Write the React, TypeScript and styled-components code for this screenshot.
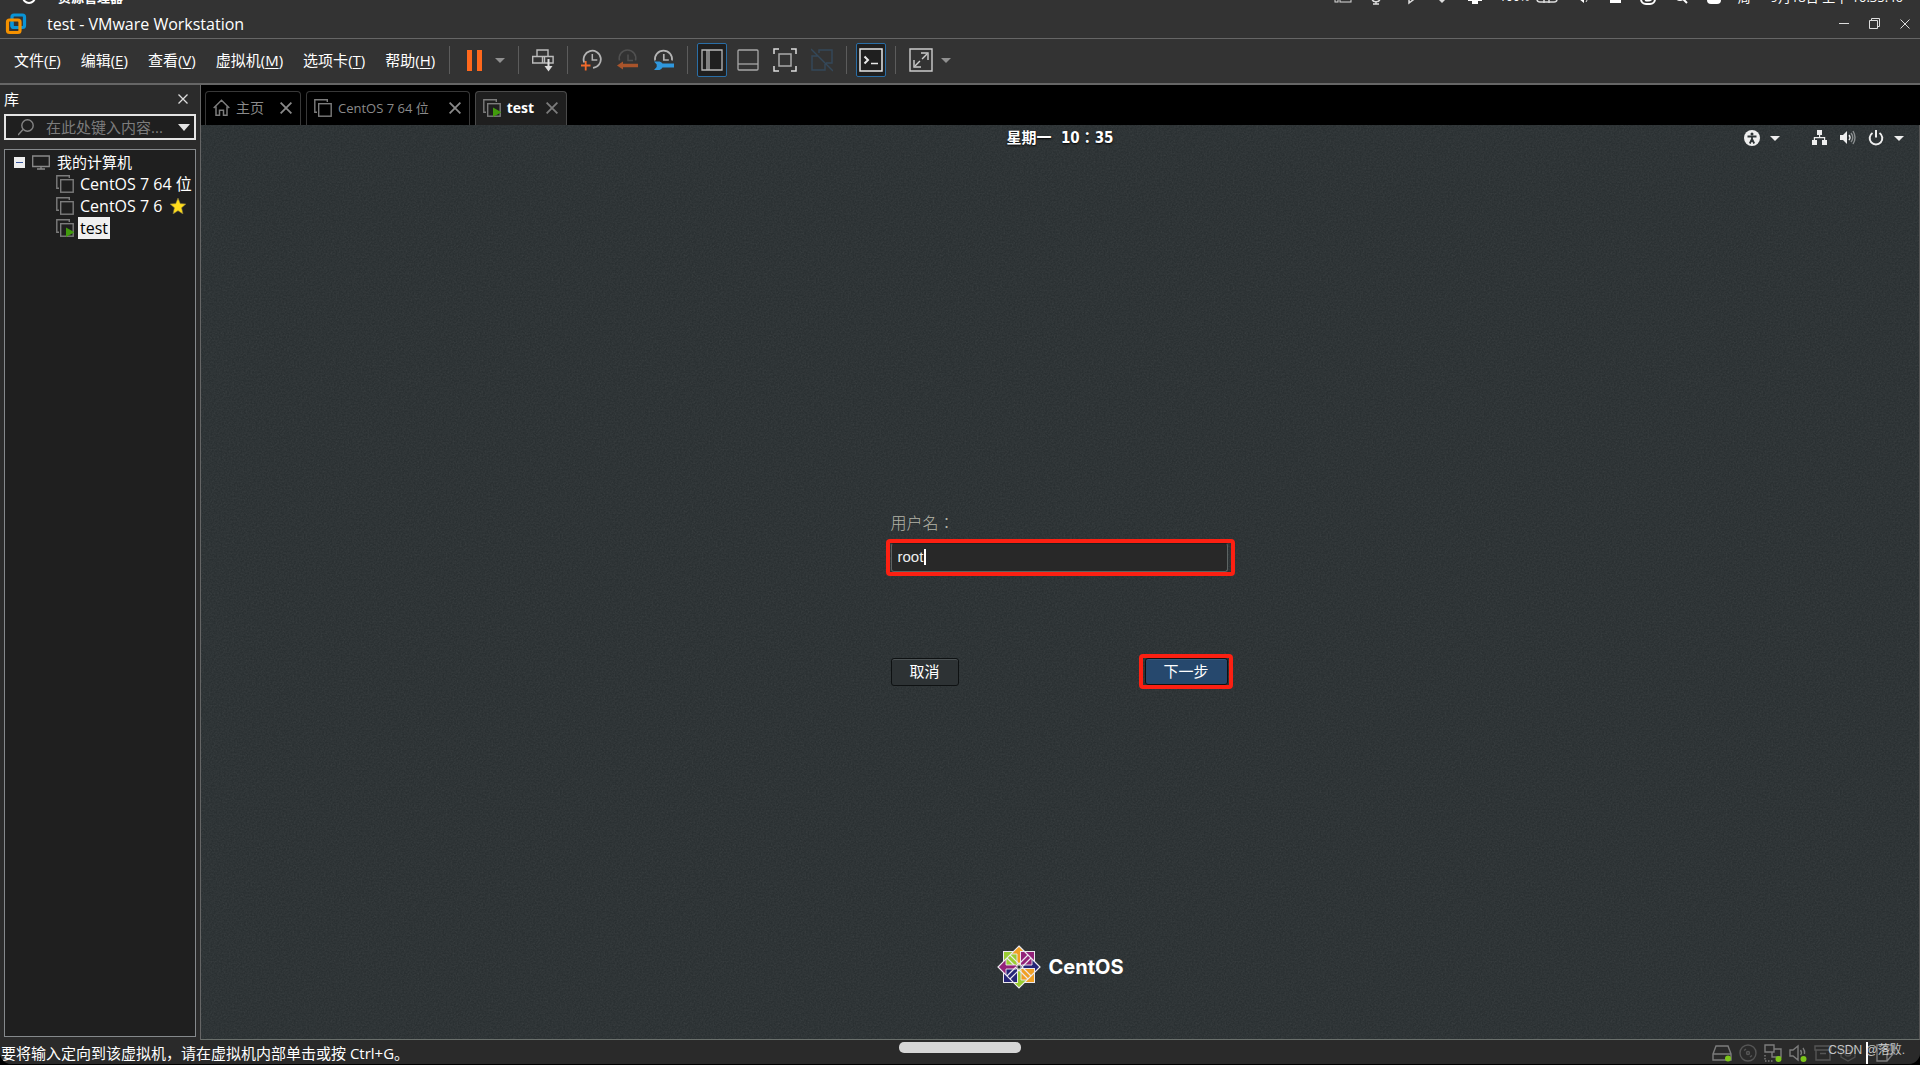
import React from 'react';
import styled, { createGlobalStyle, css } from 'styled-components';

const ui = `"Open Sans", "Noto Sans CJK SC", sans-serif`;

const noise = `url("data:image/svg+xml,%3Csvg xmlns='http://www.w3.org/2000/svg' width='256' height='256'%3E%3Cfilter id='n'%3E%3CfeTurbulence type='fractalNoise' baseFrequency='0.6' numOctaves='2' stitchTiles='stitch'/%3E%3CfeColorMatrix values='0 0 0 0 1 0 0 0 0 1 0 0 0 0 1 0.5 0.5 0 0 -0.36'/%3E%3C/filter%3E%3Crect width='256' height='256' filter='url(%23n)' opacity='0.14'/%3E%3C/svg%3E")`;

const GlobalStyle = createGlobalStyle`
  *, *::before, *::after { box-sizing: border-box; }
  html, body { margin: 0; background: #000; }
  button, input { font: inherit; color: inherit; margin: 0; }
  button { background: none; border: 0; padding: 0; white-space: nowrap; }
  svg { display: block; flex: none; }
  svg:not([fill]) { fill: none; }
`;

const Window = styled.div`
  display: flex;
  flex-direction: column;
  height: 100vh;
  background: #2b2b2b;
  color: #fff;
  font: 15px/20px ${ui};
  border-bottom: 1px solid #000;
  border-radius: 0 0 12px 12px;
  overflow: hidden;
`;

/* System strip that the window partly covers */
const SystemStrip = styled.div`
  display: flex;
  align-items: flex-end;
  flex: none;
  height: 5px;
  padding: 0 17px 0 22px;
  background: #333;
  overflow: hidden;
  font-size: 13px;
  line-height: 16px;
  white-space: nowrap;
`;
const StripApp = styled.span`
  margin-left: 22px;
  font-weight: 700;
`;
const StripIcons = styled.div`
  display: flex;
  align-items: flex-end;
  gap: 15px;
  margin-left: auto;
`;
const StripPower = styled.span`
  display: flex;
  align-items: flex-end;
  gap: 6px;
  font-size: 12px;
`;
const StripClock = styled.span`
  white-space: pre;
`;

const TitleBar = styled.header`
  display: flex;
  align-items: center;
  flex: none;
  height: 33px;
  padding: 4px 10px 0 5px;
  background: #333;
`;
const Title = styled.h1`
  margin: 0 auto 0 20px;
  font-size: 16px;
  line-height: 20px;
  font-weight: 400;
`;
const WindowButtons = styled.div`
  display: flex;
  gap: 20px;
`;

const Toolbar = styled.div`
  display: flex;
  align-items: center;
  flex: none;
  height: 47px;
  padding: 0 14px 2px;
  background: #333;
  border-top: 1px solid #666;
  border-bottom: 2px solid #666;
`;
const Menu = styled.nav`
  display: flex;
  gap: 20px;
  margin-right: 14px;
  u { text-underline-offset: 2px; }
`;
const Group = styled.div<{ $gap: number }>`
  display: flex;
  align-items: center;
  gap: ${p => p.$gap}px;
  padding: 0 13px;
  border-left: 1px solid #5c5c5c;
  height: 28px;
`;
const ToolButton = styled.button<{ $active?: boolean }>`
  display: flex;
  align-items: center;
  justify-content: center;
  ${p => p.$active && css`
    width: 30px;
    height: 34px;
    margin: 0 -4px;
    background: #1f1f1f;
    border: 1px solid #2a6ea6;
    border-radius: 2px;
  `}
`;

const Body = styled.div`
  display: flex;
  flex: 1;
  min-height: 0;
`;
const Sidebar = styled.aside`
  display: flex;
  flex-direction: column;
  flex: none;
  width: 200px;
  padding: 0 4px 3px;
`;
const SidebarHead = styled.div`
  display: flex;
  align-items: center;
  justify-content: space-between;
  height: 29px;
  padding: 0 8px 2px 0;
`;
const SidebarTitle = styled.h2`
  margin: 0;
  font-size: 15px;
  font-weight: 400;
`;
const SearchBox = styled.div`
  display: flex;
  align-items: center;
  flex: none;
  height: 26px;
  padding: 0 4px 0 12px;
  background: #1f1f1f;
  border: 2px solid #e4e4e4;
`;
const SearchInput = styled.input`
  flex: 1;
  min-width: 0;
  height: 20px;
  padding: 0;
  margin-left: 12px;
  background: none;
  border: 0;
  outline: 0;
  &::placeholder { color: #7c7c7c; opacity: 1; }
`;
const Tree = styled.ul`
  flex: 1;
  margin: 9px 0 0;
  padding: 1px 0;
  list-style: none;
  background: #1f1f1f;
  border: 1px solid #85898c;
`;
const TreeRow = styled.li<{ $child?: boolean }>`
  display: flex;
  align-items: center;
  height: 22px;
  padding: 0 2px 0 ${p => (p.$child ? 51 : 9)}px;
  gap: ${p => (p.$child ? 4 : 5)}px;
  font-size: ${p => (p.$child ? 16 : 15)}px;
`;
const Expander = styled.button`
  display: flex;
  align-items: center;
  justify-content: center;
  width: 11px;
  height: 11px;
  margin-right: 2px;
  background: #eee;
  &::before { content: ""; width: 7px; height: 1px; background: #3856a0; }
`;
const TreeName = styled.span<{ $selected?: boolean }>`
  padding: 0 2px;
  line-height: 22px;
  white-space: nowrap;
  ${p => p.$selected && css`background: #f0f0f0; color: #000;`}
`;
const ShortName = styled(TreeName)`
  width: 88px;
`;

const Workspace = styled.main`
  display: flex;
  flex-direction: column;
  flex: 1;
  min-width: 0;
  border-left: 1px solid #666;
`;
const Tabs = styled.div`
  display: flex;
  align-items: flex-end;
  flex: none;
  gap: 5px;
  height: 40px;
  padding-left: 4px;
  background: #000;
`;
const Tab = styled.div<{ $active?: boolean; $size: number; $closeGap: number }>`
  display: flex;
  align-items: center;
  height: 34px;
  padding: 0 8px 2px 7px;
  border: 1px solid ${p => (p.$active ? '#4a4a4a' : '#383838')};
  border-bottom: 0;
  border-radius: 4px 4px 0 0;
  background: ${p => (p.$active ? '#1f1f1f' : '#000')};
  color: ${p => (p.$active ? '#fff' : '#8a8a8a')};
  font-size: ${p => p.$size}px;
  font-weight: ${p => (p.$active ? 700 : 400)};
  gap: 6px;
  & > :last-child { margin-left: ${p => p.$closeGap}px; }
`;

const Screen = styled.section`
  display: flex;
  flex-direction: column;
  flex: 1;
  min-height: 0;
  padding-bottom: 50px;
  background: #2a3032 ${noise};
  border-right: 1px solid #555;
  border-bottom: 1px solid #6a706c;
`;
const PanelBar = styled.div`
  display: grid;
  grid-template-columns: 1fr auto 1fr;
  align-items: center;
  height: 26px;
  padding: 0 15px;
  text-shadow: 0 1px 2px #000;
`;
const Clock = styled.time`
  grid-column: 2;
  font: 700 15px/20px "DejaVu Sans Condensed", "Noto Sans CJK TC", sans-serif;
  white-space: pre;
`;
const Indicators = styled.div`
  display: flex;
  align-items: center;
  justify-content: flex-end;
  gap: 12px;
`;
const Indicator = styled.button<{ $wide?: boolean }>`
  display: flex;
  align-items: center;
  gap: 10px;
  margin-right: ${p => (p.$wide ? 20 : 0)}px;
`;

const Login = styled.form`
  display: flex;
  flex-direction: column;
  align-self: center;
  width: 349px;
  margin-top: 359px;
`;
const FieldLabel = styled.label`
  padding-left: 5px;
  color: #b4b4a8;
  font: 300 16px/24px "Noto Sans CJK TC", sans-serif;
`;
const Highlight = styled.div`
  position: relative;
  display: flex;
  border: 4px solid #fc2012;
  border-radius: 4px;
`;
const FieldFrame = styled(Highlight)`
  height: 37px;
  margin-top: 5px;
  padding: 0 3px 0 1px;
`;
const Field = styled.input`
  flex: 1;
  min-width: 0;
  padding: 0 6px 2px;
  background: #282828;
  border: 1px solid #5d6463;
  border-top-color: #1c1f1f;
  border-radius: 3px;
  outline: 0;
  caret-color: transparent;
  color: #eee;
  font: 15px/20px "Liberation Sans", sans-serif;
`;
const TextCursor = styled.span`
  position: absolute;
  left: 34px;
  top: 6px;
  width: 2px;
  height: 16px;
  background: #fff;
`;
const Actions = styled.div`
  display: flex;
  align-items: center;
  justify-content: space-between;
  margin-top: 78px;
  padding: 0 2px 0 5px;
`;
const NextFrame = styled(Highlight)`
  height: 35px;
  padding: 0 1px 0 2px;
`;
const LoginButton = styled.button<{ $primary?: boolean }>`
  width: ${p => (p.$primary ? 83 : 68)}px;
  height: ${p => (p.$primary ? 27 : 28)}px;
  padding-bottom: 2px;
  background: ${p => (p.$primary ? '#26486d' : '#2d3234')};
  border: 1px solid #0e1112;
  border-radius: 3px;
  box-shadow: inset 0 1px ${p => (p.$primary ? '#38597b' : '#4c5254')};
  font: 400 15px/20px "Noto Sans CJK SC", sans-serif;
`;
const Brand = styled.div`
  display: flex;
  align-items: center;
  align-self: center;
  gap: 8px;
  margin-top: auto;
  font: 700 20px/24px Inter, sans-serif;
`;

const StatusBar = styled.footer`
  position: relative;
  display: flex;
  align-items: center;
  justify-content: space-between;
  flex: none;
  height: 24px;
  padding: 2px 26px 0 1px;
  background: #2a2a2a;
`;
const Devices = styled.div`
  display: flex;
  align-items: center;
  gap: 7px;
`;
const DeviceRule = styled.i`
  width: 2px;
  height: 22px;
  margin: 0 1px 0 2px;
  background: #fff;
`;
const HomePill = styled.span`
  position: absolute;
  left: 50%;
  top: 2px;
  width: 122px;
  height: 11px;
  margin-left: -61px;
  border-radius: 5px;
  background: #d6d6d6;
`;
const Watermark = styled.span`
  position: absolute;
  right: 15px;
  top: 0;
  color: rgba(225, 225, 225, 0.85);
  font: 12px/20px "Liberation Sans", "Noto Sans CJK SC", sans-serif;
`;

const Cross = ({ size = 9, color = '#ddd', width = 1 }: { size?: number; color?: string; width?: number }) => (
  <svg width={size} height={size} viewBox="0 0 10 10" stroke={color} strokeWidth={width}>
    <path d="M.5.5l9 9M9.5.5l-9 9" />
  </svg>
);
const Caret = ({ w = 10, h = 5, color = '#909090' }: { w?: number; h?: number; color?: string }) => (
  <svg width={w} height={h} viewBox="0 0 10 5" preserveAspectRatio="none"><path d="M0 0h10L5 5z" fill={color} /></svg>
);
const VmIcon = ({ running, color = '#7c7c7c' }: { running?: boolean; color?: string }) => (
  <svg width="18" height="18" stroke={color} strokeWidth="1.4">
    <path d="M3 13.3H.8V.8h12.5V3" />
    <rect x="4.7" y="4.7" width="12.5" height="12.5" />
    {running && <path d="M10 8.5l8.5 4.8-8.5 4.7z" fill="#419b0c" stroke="none" />}
  </svg>
);
const VmwareLogo = () => (
  <svg width="22" height="22" viewBox="0 0 22 22" strokeWidth="3.2">
    <rect x="7" y="2" width="12.5" height="12.5" rx="2" stroke="#0a94d6" />
    <rect x="2.5" y="7" width="12.5" height="12.5" rx="2" stroke="#f59100" />
    <path d="M7 9v3.5q0 2 2 2h3" stroke="#0a94d6" />
  </svg>
);
const SnapshotTake = () => (
  <svg width="21" height="22">
    <path d="M3.2 13.5A8.6 8.6 0 1 1 12 18.9" stroke="#b4b4b4" strokeWidth="1.8" />
    <path d="M11.3 5v6h5" stroke="#b4b4b4" strokeWidth="1.5" />
    <path d="M0 16.5h9.5M4.7 12v9.5" stroke="#f2692a" strokeWidth="1.8" />
  </svg>
);
const SnapshotRevert = () => (
  <svg width="21" height="22">
    <path d="M2.5 11.5a8.3 8.3 0 1 1 16 0M11 5.5v6h5" stroke="#505050" strokeWidth="1.5" />
    <path d="M0 16.5l6-4v2.3h15v3.4H6v2.3z" fill="#a9542b" />
  </svg>
);
const SnapshotManage = () => (
  <svg width="21" height="22">
    <path d="M2 11.5a8.6 8.6 0 1 1 17 0M10.8 5v6h5" stroke="#b4b4b4" strokeWidth="1.7" />
    <path d="M1 12.5h5.5a4.6 4.6 0 0 1 3 2H21v4H9.5a4.6 4.6 0 0 1-3 2.500H1l2.700-3v-2.600z" fill="#2f97dd" />
  </svg>
);
const SendKeys = () => (
  <svg width="22" height="23" stroke="#bcbcbc" strokeWidth="1.4">
    <path d="M5 7.500V1h11v6.500" />
    <path d="M.7 7.500h20.400V14H.7zM10.500 7.500V14M12.500 7.500V14" />
    <path d="M16.500 10v7" stroke="#ddd" strokeWidth="2" /><path d="M12.500 17h8l-4 5.500z" fill="#ddd" stroke="none" />
  </svg>
);
const Dot = ({ x, y }: { x: number; y: number }) => <circle cx={x} cy={y} r="3" fill="#7cc51a" stroke="none" />;

const CentosLogo = () => {
  const quarter = (turn: number, square: string, arrow: string) => (
    <g key={turn} transform={`rotate(${turn} 22 22)`}>
      <rect x="6.500" y="6.500" width="14" height="14" fill={square} />
      <path d="M22 1l8 8h-6v10l-2 2-2-2V9h-6z" fill={arrow} strokeWidth=".9" />
      <path d="M13 10l9 9M10 13l9 9" strokeWidth="1.200" />
    </g>
  );
  return (
    <svg width="44" height="44" stroke="#ece9ee" strokeWidth="1">
      {quarter(0, '#9acd32', '#f0a024')}
      {quarter(90, '#932279', '#262577')}
      {quarter(180, '#f0a024', '#9acd32')}
      {quarter(270, '#262577', '#932279')}
      <path d="M22 1L43 22 22 43 1 22z" strokeWidth="1.200" />
      <rect x="20" y="20" width="4" height="4" fill="#2e3436" strokeWidth="1" />
    </svg>
  );
};

const menus = [['文件', 'F'], ['编辑', 'E'], ['查看', 'V'], ['虚拟机', 'M'], ['选项卡', 'T'], ['帮助', 'H']];

export default function App() {
  return (
    <Window>
      <GlobalStyle />
      <SystemStrip>
        <svg width="14" height="14"><circle cx="7" cy="6" r="6" stroke="#fff" strokeWidth="2" /></svg>
        <StripApp>资源管理器</StripApp>
        <StripIcons>
          <svg width="18" height="14" stroke="#ddd"><rect x="1" y="3" width="3" height="8" /><rect x="6" y="1" width="11" height="10" /></svg>
          <svg width="18" height="14" stroke="#ddd" strokeWidth="1.500"><path d="M5 7c0 5 8 5 8 0M9 11v2M6 13h6" /></svg>
          <svg width="18" height="14" stroke="#ddd" strokeWidth="1.500"><path d="M5 3l8 6-4 3V1" /></svg>
          <svg width="18" height="14"><path d="M1 4h16l-8 8z" fill="#ddd" /></svg>
          <svg width="18" height="14"><path d="M2 2h14v8H2zM6 10h6v3H6z" fill="#fff" /></svg>
          <StripPower>
            100%
            <svg width="22" height="14" stroke="#ddd" strokeWidth="1.500"><rect x="1" y="2" width="20" height="9" rx="3" /><path d="M8 4v8M13 4v8" /></svg>
          </StripPower>
          <svg width="18" height="14"><path d="M2 4h4l5-4v12l-5-4H2z" fill="#fff" /><path d="M14 4q2 4-1 7" stroke="#ddd" /></svg>
          <svg width="18" height="14"><path d="M4 1h11v11H4z" fill="#fff" /></svg>
          <svg width="18" height="14" stroke="#fff" strokeWidth="2"><rect x="2" y="-2" width="14" height="15" rx="5" /><path d="M6 9q6 2 9-4" /></svg>
          <svg width="18" height="14" stroke="#fff" strokeWidth="2"><circle cx="8" cy="4" r="5" /><path d="M11 8l4 4" /></svg>
          <svg width="18" height="14"><rect x="2" y="0" width="14" height="13" rx="4" fill="#fff" /></svg>
          <StripClock>周一  9月18日 上午 10:35:46</StripClock>
        </StripIcons>
      </SystemStrip>

      <TitleBar>
        <VmwareLogo />
        <Title>test - VMware Workstation</Title>
        <WindowButtons>
          <button aria-label="最小化"><svg width="10" height="11" stroke="#ddd"><path d="M0 5.500h10" /></svg></button>
          <button aria-label="还原"><svg width="11" height="11" stroke="#ddd"><path d="M.5 2.500h8v8h-8zM2.500 2.500v-2h8v8h-2" /></svg></button>
          <button aria-label="关闭"><Cross size={10} /></button>
        </WindowButtons>
      </TitleBar>

      <Toolbar>
        <Menu>
          {menus.map(([name, key]) => <button key={key}>{name}(<u>{key}</u>)</button>)}
        </Menu>
        <Group $gap={8}>
          <ToolButton aria-label="挂起"><svg width="24" height="21"><path d="M4 0h5v21H4zM14 0h5v21h-5z" fill="#ff681c" /></svg></ToolButton>
          <ToolButton aria-label="电源选项"><Caret /></ToolButton>
        </Group>
        <Group $gap={0}><ToolButton aria-label="发送 Ctrl+Alt+Del"><SendKeys /></ToolButton></Group>
        <Group $gap={15}>
          <ToolButton aria-label="拍摄快照"><SnapshotTake /></ToolButton>
          <ToolButton aria-label="恢复快照"><SnapshotRevert /></ToolButton>
          <ToolButton aria-label="管理快照"><SnapshotManage /></ToolButton>
        </Group>
        <Group $gap={14}>
          <ToolButton $active aria-label="库"><svg width="22" height="22" stroke="#b8b8b8" strokeWidth="1.300"><path d="M1 1h20v20H1zM6 1v20M8 1v20" /></svg></ToolButton>
          <ToolButton aria-label="缩略图栏"><svg width="22" height="22" stroke="#a8a8a8" strokeWidth="1.300"><rect x="1" y="1" width="20" height="20" rx="1" /><path d="M1 15h20" /></svg></ToolButton>
          <ToolButton aria-label="全屏"><svg width="24" height="24" stroke="#ddd" strokeWidth="1.500"><path d="M1 6V1h5M18 1h5v5M23 18v5h-5M6 23H1v-5" /><rect x="6" y="6" width="12" height="12" stroke="#aaa" /></svg></ToolButton>
          <ToolButton aria-label="Unity"><svg width="22" height="24" stroke="#34485a" strokeWidth="1.400"><path d="M8 5V2h13v13h-6M7 8H1v14h13v-6M0 1l22 22" /></svg></ToolButton>
        </Group>
        <Group $gap={0}>
          <ToolButton $active aria-label="控制台"><svg width="24" height="24" stroke="#e8e8e8" strokeWidth="1.500"><path d="M1 1h22v22H1z" /><path d="M5.500 8.500l3.500 3.500-3.500 3.500" strokeWidth="2" /><path d="M12 15.500h7" /></svg></ToolButton>
        </Group>
        <Group $gap={8}>
          <ToolButton aria-label="自由拉伸"><svg width="24" height="24" stroke="#ccc" strokeWidth="1.400"><path d="M1 1h22v22H1zM12 5h7v7M5 12v7h7" /><path d="M6 18L18 6" strokeDasharray="7 3" /></svg></ToolButton>
          <ToolButton aria-label="拉伸选项"><Caret /></ToolButton>
        </Group>
      </Toolbar>

      <Body>
        <Sidebar>
          <SidebarHead><SidebarTitle>库</SidebarTitle><button aria-label="关闭库"><Cross size={10} width={1.3} /></button></SidebarHead>
          <SearchBox>
            <svg width="16" height="17" stroke="#858585" strokeWidth="1.400"><circle cx="9.500" cy="6.500" r="5.700" /><path d="M5 10.500L0 16" /></svg>
            <SearchInput aria-label="搜索" placeholder="在此处键入内容..." />
            <button aria-label="筛选"><Caret w={12} h={7} color="#e4e4e4" /></button>
          </SearchBox>
          <Tree>
            <TreeRow>
              <Expander aria-label="折叠" />
              <svg width="18" height="15" stroke="#8a8a8a" strokeWidth="1.300"><path d="M.7 1h16.600v10.500H.7zM9 11.500V14M5 14h8" /></svg>
              <TreeName>我的计算机</TreeName>
            </TreeRow>
            <TreeRow $child><VmIcon /><TreeName>CentOS 7 64 位</TreeName></TreeRow>
            <TreeRow $child>
              <VmIcon /><ShortName>CentOS 7 6</ShortName>
              <svg width="16" height="16"><path d="M8 0l2.300 5.600 5.700.4-4.400 3.800L13 16 8 12.700 3 16l1.400-6.200L0 6l5.700-.4z" fill="#ffdc1c" stroke="#7d7440" strokeWidth=".6" /></svg>
            </TreeRow>
            <TreeRow $child><VmIcon running /><TreeName $selected>test</TreeName></TreeRow>
          </Tree>
        </Sidebar>

        <Workspace>
          <Tabs>
            <Tab $size={14} $closeGap={10}>
              <svg width="17" height="17" stroke="#7c7c7c" strokeWidth="1.500"><path d="M.7 9L8.500 1.200 16.300 9M3 7.500v8.700h3.500v-5h4v5H14V7.500" /></svg>
              <span>主页</span>
              <button aria-label="关闭主页"><Cross size={12} color="#8a8a8a" width={1.5} /></button>
            </Tab>
            <Tab $size={13} $closeGap={14}>
              <VmIcon /><span>CentOS 7 64 位</span>
              <button aria-label="关闭 CentOS 7"><Cross size={12} color="#8a8a8a" width={1.5} /></button>
            </Tab>
            <Tab $active $size={14} $closeGap={6}>
              <VmIcon running /><span>test</span>
              <button aria-label="关闭 test"><Cross size={12} color="#7c7c7c" width={1.5} /></button>
            </Tab>
          </Tabs>

          <Screen>
            <PanelBar>
              <Clock>星期一  10：35</Clock>
              <Indicators>
                <Indicator $wide aria-label="辅助功能">
                  <svg width="16" height="16"><circle cx="8" cy="8" r="8" fill="#eee" /><circle cx="8" cy="4" r="1.500" fill="#2e3436" /><path d="M3.500 6.500h9M8 6.500v3M8 9l-2.200 4.500M8 9l2.200 4.500" stroke="#2e3436" strokeWidth="1.800" /></svg>
                  <Caret color="#eee" />
                </Indicator>
                <Indicator aria-label="网络"><svg width="16" height="16"><path d="M5 0h5v5H5zM0 10h5v5H0zM10 10h5v5h-5zM7 5h1.200v2h5v3H12V8.200H3V10H1.800V7H7z" fill="#eee" /></svg></Indicator>
                <Indicator aria-label="音量"><svg width="16" height="16"><path d="M0 5h3l4-4v13l-4-4H0z" fill="#eee" /><path d="M9 5q2 2.500 0 5" stroke="#eee" strokeWidth="1.400" /><path d="M11 3q3.500 4.500 0 9M13 1q4 6.500 0 13" stroke="#8a8e8f" strokeWidth="1.400" /></svg></Indicator>
                <Indicator aria-label="电源">
                  <svg width="16" height="16" stroke="#eee" strokeWidth="2"><path d="M4.500 3a6.300 6.300 0 1 0 7 0M8 0v7.500" /></svg>
                  <Caret color="#eee" />
                </Indicator>
              </Indicators>
            </PanelBar>

            <Login onSubmit={e => e.preventDefault()}>
              <FieldLabel htmlFor="username">用户名：</FieldLabel>
              <FieldFrame>
                <Field id="username" defaultValue="root" />
                <TextCursor />
              </FieldFrame>
              <Actions>
                <LoginButton type="button">取消</LoginButton>
                <NextFrame><LoginButton $primary type="submit">下一步</LoginButton></NextFrame>
              </Actions>
            </Login>

            <Brand><CentosLogo /><span>CentOS</span></Brand>
          </Screen>
        </Workspace>
      </Body>

      <StatusBar>
        <span>要将输入定向到该虚拟机，请在虚拟机内部单击或按 Ctrl+G。</span>
        <HomePill />
        <Devices>
          <svg width="20" height="18" stroke="#7c7c7c" strokeWidth="1.400"><path d="M1 10L4 2h12l3 8v6H1zM1 10h18" /><Dot x={16} y={14.5} /></svg>
          <svg width="18" height="18" stroke="#555" strokeWidth="1.400"><circle cx="9" cy="9" r="8" /><circle cx="9" cy="9" r="1.500" /><path d="M5 6.500L7 5M13 11.500l-2 1.500" /></svg>
          <svg width="18" height="18" stroke="#7c7c7c" strokeWidth="1.400"><path d="M1 1h9v7H1zM10 5h7v8H8V8" /><path d="M1 11v6h9" strokeDasharray="1.500 1.500" /><Dot x={14.5} y={15} /></svg>
          <svg width="18" height="18" stroke="#7c7c7c" strokeWidth="1.400"><path d="M1 6h3l5-4v14l-5-4H1zM11.500 6q2 3 0 5M14 4q2 2.500 1.500 6" /><Dot x={14.5} y={15} /></svg>
          <svg width="18" height="18" stroke="#555" strokeWidth="1.400"><path d="M1 2h16v4H1zM2 6v10h14V6M6 9.500h6" /></svg>
          <svg width="18" height="18" stroke="#4c4c4c" strokeWidth="1.400"><path d="M9 1l7 4v8l-7 4-7-4V5z" /><circle cx="9" cy="9" r="3" /></svg>
          <DeviceRule />
          <svg width="18" height="18" stroke="#7c7c7c" strokeWidth="1.400"><path d="M1 1h16v9l-6 7H1zM11 17v-7h6M4 5h10" /></svg>
        </Devices>
        <Watermark>CSDN @落败.</Watermark>
      </StatusBar>
    </Window>
  );
}
